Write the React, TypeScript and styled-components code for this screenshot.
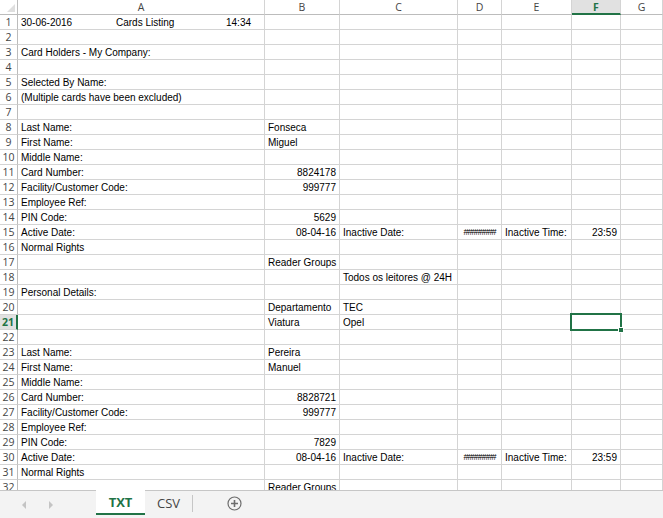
import React, { FC } from 'react'
import styled, { createGlobalStyle } from 'styled-components'

type ColKey = 'A' | 'B' | 'C' | 'D' | 'E' | 'F' | 'G'
type RowData = Partial<Record<ColKey, string>>

const COLUMNS: { key: ColKey; width: string }[] = [
    { key: 'A', width: '247px' },
    { key: 'B', width: '75px' },
    { key: 'C', width: '118px' },
    { key: 'D', width: '44px' },
    { key: 'E', width: '70px' },
    { key: 'F', width: '49px' },
    { key: 'G', width: '1fr' },
]

const ROW_COUNT = 32
const SELECTED = { col: 'F' as ColKey, row: 21 }

const cardBlock = (first: string, last: string, card: string, pin: string): Record<number, RowData> => ({
    0: { A: 'Last Name:', B: last },
    1: { A: 'First Name:', B: first },
    2: { A: 'Middle Name:' },
    3: { A: 'Card Number:', B: card },
    4: { A: 'Facility/Customer Code:', B: '999777' },
    5: { A: 'Employee Ref:' },
    6: { A: 'PIN Code:', B: pin },
    7: { A: 'Active Date:', B: '08-04-16', C: 'Inactive Date:', D: '########', E: 'Inactive Time:', F: '23:59' },
    8: { A: 'Normal Rights' },
    9: { B: 'Reader Groups' },
    10: { C: 'Todos os leitores @ 24H' },
    11: { A: 'Personal Details:' },
    12: { B: 'Departamento', C: 'TEC' },
    13: { B: 'Viatura', C: 'Opel' },
})

const buildRows = (): Record<number, RowData> => {
    const rows: Record<number, RowData> = {
        3: { A: 'Card Holders - My Company:' },
        5: { A: 'Selected By Name:' },
        6: { A: '(Multiple cards have been excluded)' },
    }
    const blocks = [
        { start: 8, data: cardBlock('Miguel', 'Fonseca', '8824178', '5629') },
        { start: 23, data: cardBlock('Manuel', 'Pereira', '8828721', '7829') },
    ]
    blocks.forEach(({ start, data }) => {
        Object.entries(data).forEach(([offset, row]) => {
            const n = start + Number(offset)
            if (n <= ROW_COUNT) rows[n] = row
        })
    })
    return rows
}

const ROWS = buildRows()

const isNumeric = (v: string) => /^\d/.test(v)

const App: FC = () => {
    return (
        <>
            <GlobalStyle />
            <Workbook>
                <SheetArea>
                    <Grid>
                        <Corner>
                            <CornerMark />
                        </Corner>
                        {COLUMNS.map((c) => (
                            <ColHeader key={c.key} $active={c.key === SELECTED.col}>
                                {c.key}
                            </ColHeader>
                        ))}
                        {Array.from({ length: ROW_COUNT }, (_, i) => i + 1).map((n) => (
                            <React.Fragment key={n}>
                                <RowHeader $active={n === SELECTED.row}>{n}</RowHeader>
                                {COLUMNS.map((c) => {
                                    const value = ROWS[n]?.[c.key]
                                    const selected = n === SELECTED.row && c.key === SELECTED.col
                                    if (n === 1 && c.key === 'A') {
                                        return (
                                            <Cell key={c.key}>
                                                <TitlePart $w={95}>30-06-2016</TitlePart>
                                                <TitlePart $w={110}>Cards Listing</TitlePart>
                                                <TitlePart $w={30}>14:34</TitlePart>
                                            </Cell>
                                        )
                                    }
                                    return (
                                        <Cell
                                            key={c.key}
                                            $right={!!value && isNumeric(value)}
                                            $hash={value === '########'}
                                            $selected={selected}
                                        >
                                            {value}
                                            {selected && (
                                                <Selection>
                                                    <FillHandle />
                                                </Selection>
                                            )}
                                        </Cell>
                                    )
                                })}
                            </React.Fragment>
                        ))}
                    </Grid>
                </SheetArea>
                <TabBar>
                    <NavArrows>
                        <Arrow $dir="left" />
                        <Arrow $dir="right" />
                    </NavArrows>
                    <Tab $active>TXT</Tab>
                    <Tab>CSV</Tab>
                    <TabDivider />
                    <AddSheet>
                        <svg width="15" height="15" viewBox="0 0 15 15">
                            <circle cx="7.5" cy="7.5" r="6.5" fill="none" stroke="#6d6d6d" strokeWidth="1.2" />
                            <path d="M7.5 4v7M4 7.5h7" stroke="#6d6d6d" strokeWidth="1.6" />
                        </svg>
                    </AddSheet>
                </TabBar>
            </Workbook>
        </>
    )
}

export default App

const GlobalStyle = createGlobalStyle`
    html, body {
        margin: 0;
        padding: 0;
        background: #ffffff;
    }
    * {
        box-sizing: border-box;
    }
`

const Workbook = styled.div`
    display: flex;
    flex-direction: column;
    width: 663px;
    height: 518px;
    overflow: hidden;
    font-family: "Liberation Sans", Arial, sans-serif;
`

const SheetArea = styled.div`
    flex: 1;
    overflow: hidden;
    background: #ffffff;
`

const Grid = styled.div`
    display: grid;
    grid-template-columns: 18px ${COLUMNS.map((c) => c.width).join(' ')};
    grid-auto-rows: 15px;
`

const Corner = styled.div`
    position: relative;
    border-right: 1px solid #bcbcbc;
    border-bottom: 1px solid #bcbcbc;
`

const CornerMark = styled.div`
    position: absolute;
    right: 2px;
    bottom: 2px;
    width: 0;
    height: 0;
    border-left: 8px solid transparent;
    border-bottom: 8px solid #dfdfdf;
`

const ColHeader = styled.div<{ $active?: boolean }>`
    display: flex;
    align-items: center;
    justify-content: center;
    font-family: "Open Sans", "Liberation Sans", sans-serif;
    font-size: 10.5px;
    color: ${(p) => (p.$active ? '#217346' : '#444444')};
    font-weight: ${(p) => (p.$active ? 700 : 400)};
    background: ${(p) => (p.$active ? '#e1e1e1' : '#ffffff')};
    border-right: 1px solid #d4d4d4;
    border-bottom: ${(p) => (p.$active ? '2px solid #217346' : '1px solid #bcbcbc')};
`

const RowHeader = styled.div<{ $active?: boolean }>`
    display: flex;
    align-items: center;
    justify-content: center;
    font-family: "Open Sans", "Liberation Sans", sans-serif;
    font-size: 10.5px;
    color: ${(p) => (p.$active ? '#217346' : '#444444')};
    font-weight: ${(p) => (p.$active ? 700 : 400)};
    background: ${(p) => (p.$active ? '#e1e1e1' : '#ffffff')};
    border-right: ${(p) => (p.$active ? '2px solid #217346' : '1px solid #bcbcbc')};
    border-bottom: 1px solid #d4d4d4;
`

const Cell = styled.div<{ $right?: boolean; $hash?: boolean; $selected?: boolean }>`
    position: relative;
    display: flex;
    align-items: center;
    justify-content: ${(p) => (p.$right ? 'flex-end' : p.$hash ? 'center' : 'flex-start')};
    padding: 0 3px 0 3px;
    font-size: ${(p) => (p.$hash ? '9px' : '10px')};
    letter-spacing: ${(p) => (p.$hash ? '-1px' : '0')};
    color: #000000;
    white-space: nowrap;
    overflow: ${(p) => (p.$selected ? 'visible' : 'hidden')};
    border-right: 1px solid #d4d4d4;
    border-bottom: 1px solid #d4d4d4;
`

const TitlePart = styled.span<{ $w: number }>`
    display: inline-block;
    width: ${(p) => p.$w}px;
    flex: none;
`

const Selection = styled.div`
    position: absolute;
    left: -2px;
    top: -2px;
    right: -2px;
    bottom: -2px;
    border: 2px solid #217346;
    z-index: 2;
`

const FillHandle = styled.div`
    position: absolute;
    right: -4px;
    bottom: -4px;
    width: 6px;
    height: 6px;
    background: #217346;
    border: 1px solid #ffffff;
`

const TabBar = styled.div`
    display: flex;
    align-items: stretch;
    height: 28px;
    flex: none;
    background: #f3f3f3;
    border-top: 1px solid #c6c6c6;
    font-family: "Open Sans", "Liberation Sans", sans-serif;
`

const NavArrows = styled.div`
    display: flex;
    align-items: center;
    width: 96px;
    padding-left: 22px;
    gap: 23px;
`

const Arrow = styled.div<{ $dir: 'left' | 'right' }>`
    width: 0;
    height: 0;
    border-top: 4px solid transparent;
    border-bottom: 4px solid transparent;
    ${(p) => (p.$dir === 'left' ? 'border-right: 4px solid #c4c4c4;' : 'border-left: 4px solid #c4c4c4;')}
`

const Tab = styled.div<{ $active?: boolean }>`
    display: flex;
    align-items: center;
    justify-content: center;
    width: ${(p) => (p.$active ? '49px' : '47px')};
    height: 25px;
    margin-top: -1px;
    font-size: 13px;
    font-weight: ${(p) => (p.$active ? 700 : 400)};
    color: ${(p) => (p.$active ? '#217346' : '#444444')};
    background: ${(p) => (p.$active ? '#ffffff' : 'transparent')};
    border-bottom: ${(p) => (p.$active ? '2px solid #217346' : 'none')};
`

const TabDivider = styled.div`
    width: 1px;
    margin: 4px 0 6px;
    background: #c6c6c6;
`

const AddSheet = styled.div`
    display: flex;
    align-items: center;
    margin-left: 34px;
    padding-bottom: 3px;
`
